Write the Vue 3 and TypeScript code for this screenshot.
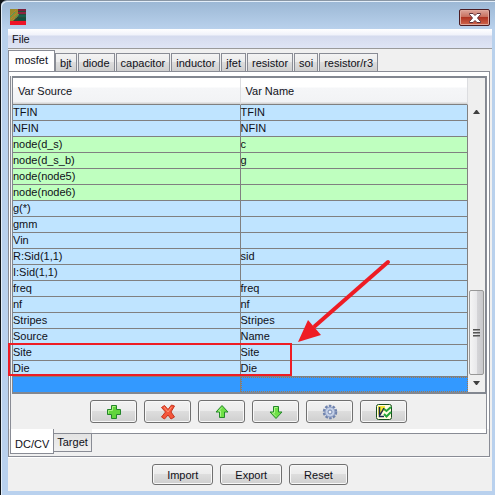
<script setup lang="ts">
import { ref } from 'vue'

interface Row {
  source: string
  name: string
  kind?: 'node' | 'selected'
}

const deviceTabs: string[] = ['mosfet', 'bjt', 'diode', 'capacitor', 'inductor', 'jfet', 'resistor', 'soi', 'resistor/r3']
const activeDevice = ref('mosfet')
const pageTabs: string[] = ['DC/CV', 'Target']
const activePage = ref('DC/CV')

const rows: Row[] = [
  { source: 'TFIN', name: 'TFIN' },
  { source: 'NFIN', name: 'NFIN' },
  { source: 'node(d_s)', name: 'c', kind: 'node' },
  { source: 'node(d_s_b)', name: 'g', kind: 'node' },
  { source: 'node(node5)', name: '', kind: 'node' },
  { source: 'node(node6)', name: '', kind: 'node' },
  { source: 'g(*)', name: '' },
  { source: 'gmm', name: '' },
  { source: 'Vin', name: '' },
  { source: 'R:Sid(1,1)', name: 'sid' },
  { source: 'I:Sid(1,1)', name: '' },
  { source: 'freq', name: 'freq' },
  { source: 'nf', name: 'nf' },
  { source: 'Stripes', name: 'Stripes' },
  { source: 'Source', name: 'Name' },
  { source: 'Site', name: 'Site' },
  { source: 'Die', name: 'Die' },
  { source: '', name: '', kind: 'selected' },
]
</script>

<template>
  <main class="window">
    <header class="titlebar">
      <svg class="logo" width="16" height="16" viewBox="0 0 16 16" aria-hidden="true">
        <rect width="16" height="12" fill="#2b4a38" />
        <path d="M8 0h8v2H8z" fill="#7c1d3c" />
        <path d="M8 3h8v2H8z" fill="#8f2440" />
        <path d="M8 6h8v2H8z" fill="#17604f" />
        <path d="M8 9h8v2H8z" fill="#14503f" />
        <path d="M0 0h8v7L3 12H0z" fill="#9a8a2c" />
        <path d="M1 10l7-7M1 6l5-5M3 11l6-5" fill="none" stroke="#d0783a" stroke-dasharray="1 1" />
        <path d="M0 8l5-5M5 9l4-4" fill="none" stroke="#46a05a" />
        <rect y="12" width="16" height="4" fill="#ee1528" />
      </svg>
      <button class="close" type="button" aria-label="Close">
        <svg width="12" height="10" viewBox="0 0 12 10">
          <path d="M.5 .5h3.500L6 2.500 8 .5h3.500v1L8.500 5l3 3.500v1H8L6 7.500 4 9.500H.5v-1L3.500 5l-3-3.500z" fill="#fff" stroke="#5c3038" />
        </svg>
      </button>
    </header>

    <div class="client">
      <nav class="menubar"><button type="button">File</button></nav>

      <div class="tabs" role="tablist">
        <button
          v-for="tab in deviceTabs"
          :key="tab"
          type="button"
          role="tab"
          :aria-selected="tab === activeDevice"
          :class="{ active: tab === activeDevice }"
          @click="activeDevice = tab"
        >{{ tab }}</button>
      </div>

      <section class="panel">
        <div class="mat">
          <div class="page">
            <div class="grid">
              <table>
                <thead>
                  <tr><th>Var Source</th><th>Var Name</th></tr>
                </thead>
                <tbody>
                  <tr v-for="(row, i) in rows" :key="i" :class="row.kind">
                    <td>{{ row.source }}</td>
                    <td>{{ row.name }}</td>
                  </tr>
                </tbody>
              </table>
              <div class="scroll">
                <svg width="7" height="4" viewBox="0 0 7 4"><path d="M0 4l3-4h1l3 4z" fill="#404040" /></svg>
                <div class="track">
                  <div class="thumb"><i></i><i></i><i></i></div>
                </div>
                <svg width="7" height="4" viewBox="0 0 7 4"><path d="M0 0h7L4 4H3z" fill="#404040" /></svg>
              </div>
            </div>

            <div class="tools">
              <button type="button" aria-label="Add">
                <svg width="16" height="16" viewBox="0 0 16 16">
                  <path d="M5.500 1.500h5v4h4v5h-4v4h-5v-4h-4v-5h4z" fill="#62d53c" stroke="#24852a" />
                  <path d="M6.500 6.500v-4h3M2.500 9.500v-3h4" fill="none" stroke="#a8f080" />
                </svg>
              </button>
              <button type="button" aria-label="Delete">
                <svg width="16" height="16" viewBox="0 0 16 16">
                  <path d="M1.500 3.500l3-2 3.500 4 3.500-4.500 3 1-3.500 6 3.500 5-3.500 2-3-4-3.500 4-3-2 4-5z" fill="#f4553a" stroke="#c5351f" stroke-linejoin="round" />
                  <path d="M4 3l4 5 3.500-5" fill="none" stroke="#ff9676" />
                </svg>
              </button>
              <button type="button" aria-label="Move up">
                <svg width="16" height="16" viewBox="0 0 16 16">
                  <path d="M8 1.500l6 6.500h-3.500v5.500h-5V8H2z" fill="#6ee045" stroke="#24882a" />
                  <path d="M6.500 12.500V7h-2L8 3.500" fill="none" stroke="#b0f58e" />
                </svg>
              </button>
              <button type="button" aria-label="Move down">
                <svg width="16" height="16" viewBox="0 0 16 16">
                  <path d="M8 14.500L14 8h-3.500V2.500h-5V8H2z" fill="#6ee045" stroke="#24882a" />
                  <path d="M9.500 3.500h-3V9h-2L8 12.500" fill="none" stroke="#b0f58e" />
                </svg>
              </button>
              <button type="button" aria-label="Settings">
                <svg width="16" height="16" viewBox="0 0 16 16">
                  <circle cx="8" cy="8" r="6" fill="none" stroke="#6f83ae" stroke-width="2.500" stroke-dasharray="2.500 1.270" />
                  <circle cx="8" cy="8" r="5" fill="#c3cfe6" stroke="#8798c0" />
                  <circle cx="8" cy="8" r="2" fill="#eef0f5" stroke="#7386b0" />
                </svg>
              </button>
              <button type="button" aria-label="Check plots">
                <svg width="16" height="16" viewBox="0 0 16 16">
                  <rect x=".5" y=".5" width="15" height="15" rx="2" fill="#fffde0" stroke="#174d1c" />
                  <path d="M2 2h7v4L2 11z" fill="#f4e838" />
                  <path d="M3.500 3v9.500H8M4 11l4-7" fill="none" stroke="#1b2850" stroke-width="1.500" />
                  <path d="M8 5l2.500 2L15 3M8 10l2.500 2.500L15 8" fill="none" stroke="#25a43a" stroke-width="2" />
                </svg>
              </button>
            </div>
          </div>
        </div>

        <div class="page-tabs" role="tablist">
          <button
            v-for="tab in pageTabs"
            :key="tab"
            type="button"
            role="tab"
            :aria-selected="tab === activePage"
            :class="{ active: tab === activePage }"
            @click="activePage = tab"
          >{{ tab }}</button>
          <span class="rest"></span>
        </div>
      </section>

      <footer class="actions">
        <button type="button">Import</button>
        <button type="button">Export</button>
        <button type="button">Reset</button>
      </footer>
    </div>

    <div class="highlight"></div>
    <svg class="arrow" width="100" height="90" viewBox="0 0 100 90" aria-hidden="true">
      <path d="M93 6L20 70" stroke="#ee1c24" stroke-width="4" stroke-linecap="round" />
      <path d="M3 86L13 64 26 79z" fill="#ee1c24" />
    </svg>
  </main>
</template>

<style>
body {
  background: #101418;
}
</style>

<style scoped>
* {
  box-sizing: border-box;
}
.window {
  position: relative;
  margin-left: 1px;
  min-height: 100vh;
  padding: 0 3px 4px 7px;
  border-top: 1px solid #8a97a5;
  border-top-left-radius: 6px;
  background: linear-gradient(#9bb7d4, #b9d1ec 28px, #b9d1ee);
  box-shadow: inset 1px 1px 0 #e3eef9;
  font: 11px/14px Tahoma, 'Liberation Sans', sans-serif;
  color: #101018;
}
button {
  font: inherit;
  color: inherit;
  margin: 0;
  padding: 0;
}
svg {
  display: block;
}
.titlebar {
  display: flex;
  justify-content: space-between;
  align-items: flex-start;
  height: 28px;
  padding: 8px 2px 0;
}
.close {
  display: grid;
  place-items: center;
  width: 31px;
  height: 17px;
  border: 1px solid #4c1c22;
  border-radius: 2px;
  background: linear-gradient(#dda59a, #c8705f 45%, #af3422 50%, #d0664c);
  box-shadow: inset 0 0 0 1px #e0a89c;
}
.client {
  background: #f0f0f0;
}
.menubar {
  display: flex;
  height: 20px;
  padding: 0 4px;
  border-bottom: 1px solid #9a9a9a;
  background: linear-gradient(#fff, #f0f2fa 6px, #d5dbee 7px, #dfe5f5);
}
.menubar button {
  border: 0;
  background: none;
}
.tabs {
  display: flex;
  align-items: flex-end;
  height: 22px;
}
.tabs button {
  height: 18px;
  padding: 0 4px;
  margin-right: 1px;
  border: 1px solid #898c95;
  border-bottom: 0;
  background: linear-gradient(#f3f3f3, #ebebeb 50%, #dddddd 50%, #cfcfcf);
}
.tabs .active {
  height: 21px;
  padding: 0 6px 2px;
  margin-right: 0;
  background: #fff;
}
.panel {
  margin-right: 2px;
  border: 1px solid #898c95;
  box-shadow: 0 1px 0 #fff;
}
.mat {
  padding: 4px 2px 0 1px;
  background: #fff;
}
.page {
  border-left: 1px solid #898c95;
  border-right: 1px solid #898c95;
  background: #f0f0f0;
}
.grid {
  display: flex;
  margin-left: 1px;
  border: 1px solid #828790;
  border-top-width: 2px;
  border-bottom-width: 2px;
}
table {
  flex: 1;
  width: 100%;
  table-layout: fixed;
  border-collapse: separate;
  border-spacing: 0;
}
th {
  height: 27px;
  padding: 0 5px;
  border-bottom: 1px solid #808080;
  border-right: 1px solid #dcdde0;
  background: linear-gradient(#fff 9px, #f5f6f8 10px, #f2f3f5 24px, #d5d5d5 25px);
  text-align: left;
  font-weight: normal;
}
td {
  height: 16px;
  padding: 0;
  border-bottom: 1px solid #808080;
  border-right: 1px solid #808080;
  background: #bfe4ff;
  line-height: 14px;
  vertical-align: top;
}
.node td {
  background: #bfffbf;
}
.selected td {
  height: 15px;
  border-bottom: 0;
  background: #3399ff;
}
.selected td + td {
  border: 1px dotted #a07850;
}
.scroll {
  display: flex;
  flex: none;
  flex-direction: column;
  align-items: center;
  width: 17px;
  padding: 32px 0 7px;
  background: #efefef;
}
.track {
  flex: 1;
  display: flex;
  flex-direction: column;
  justify-content: flex-end;
  width: 15px;
  padding-bottom: 6px;
}
.thumb {
  display: flex;
  flex-direction: column;
  align-items: center;
  justify-content: center;
  gap: 1px;
  height: 85px;
  border: 1px solid #979797;
  border-radius: 2px;
  background: linear-gradient(90deg, #f5f5f5, #e9e9eb 50%, #d6d6d9 52%, #c9c9cc);
}
.thumb i {
  width: 7px;
  height: 2px;
  border-top: 1px solid #555;
  background: #999;
}
.tools {
  display: flex;
  justify-content: center;
  gap: 7px;
  padding: 6px 0;
}
.tools button,
.actions button {
  display: grid;
  place-items: center;
  border: 1px solid #707070;
  border-radius: 3px;
  background: linear-gradient(#f2f2f2, #ebebeb 50%, #dddddd 50%, #cfcfcf);
  box-shadow: inset 0 0 0 1px #f8f8f8;
}
.tools button {
  width: 47px;
  height: 23px;
}
.page-tabs {
  display: flex;
  align-items: flex-start;
  height: 27px;
  margin: 0 2px 0 1px;
}
.page-tabs button {
  height: 19px;
  margin-top: 4px;
  padding: 0 3px 2px;
  border: 1px solid #898c95;
  border-left: 0;
  background: linear-gradient(#e3e3e3, #f0f0f0);
}
.page-tabs .active {
  height: 25px;
  margin-top: 0;
  padding: 5px 4px 0;
  border: 1px solid #898c95;
  border-top: 0;
  background: #fff;
}
.rest {
  flex: 1;
  height: 5px;
  border: 1px solid #898c95;
  border-width: 0 1px 1px 0;
  background: #fff;
}
.actions {
  display: flex;
  justify-content: center;
  gap: 7px;
  padding: 7px 0 6px;
}
.actions button {
  height: 21px;
  padding: 0 14px;
}
.highlight {
  position: absolute;
  left: 7px;
  top: 342px;
  width: 284px;
  height: 33px;
  border: 2px solid #ee1c24;
}
.arrow {
  position: absolute;
  left: 294px;
  top: 255px;
}
</style>
